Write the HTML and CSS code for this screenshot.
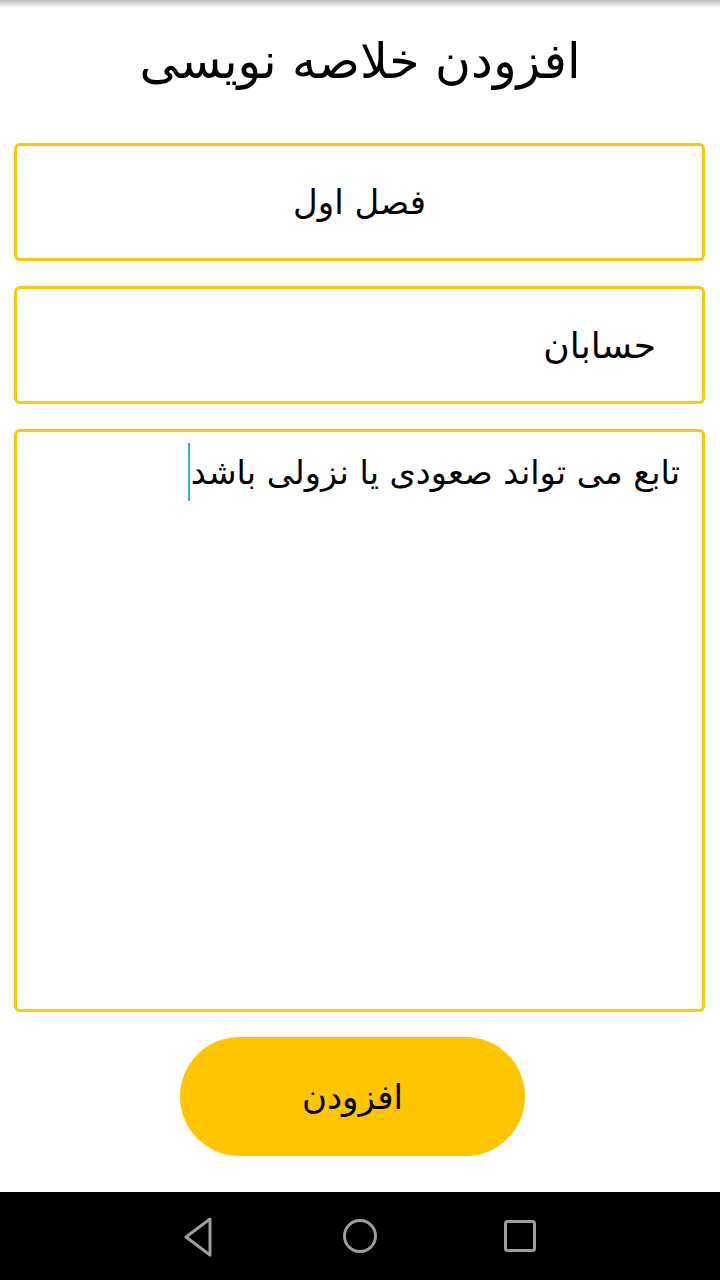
FILE: index.html
```html
<!DOCTYPE html>
<html lang="fa">
<head>
<meta charset="utf-8">
<link rel="stylesheet" href="styles.css">
</head>
<body>
<div class="screen">
  <div class="topshade"></div>
  <h1 class="title">افزودن خلاصه نویسی</h1>
  <div class="form">
    <div class="field field-center">فصل اول</div>
    <div class="field field-right">حسابان</div>
    <div class="field field-area"><p class="area-text">تابع می تواند صعودی یا نزولی باشد<span class="caret"></span></p></div>
    <div class="btn-row"><div class="btn">افزودن</div></div>
  </div>
  <div class="navbar">
    <svg class="nav-icon" width="40" height="44" viewBox="0 0 40 44"><path d="M30 5 L6 23 L30 41 Z" fill="none" stroke="#9e9e9e" stroke-width="3" stroke-linejoin="round"/></svg>
    <svg class="nav-icon" width="40" height="40" viewBox="0 0 40 40"><circle cx="20" cy="20" r="15.5" fill="none" stroke="#9e9e9e" stroke-width="3"/></svg>
    <svg class="nav-icon" width="40" height="40" viewBox="0 0 40 40"><rect x="5.5" y="5.5" width="29" height="29" rx="2" fill="none" stroke="#9e9e9e" stroke-width="3"/></svg>
  </div>
</div>
</body>
</html>
```
FILE: styles.css
```css
html, body {
  margin: 0;
  padding: 0;
  background: #ffffff;
}
.screen {
  width: 720px;
  height: 1280px;
  display: flex;
  flex-direction: column;
  font-family: "DejaVu Sans", "Noto Sans", sans-serif;
  color: #000;
  position: relative;
  overflow: hidden;
}
.topshade {
  position: absolute;
  top: 0;
  left: 0;
  right: 0;
  height: 8px;
  background: linear-gradient(#bdbdbd, rgba(255,255,255,0));
}
.title {
  margin: 0;
  height: 130px;
  display: flex;
  align-items: center;
  justify-content: center;
  padding-bottom: 8px;
  box-sizing: border-box;
  font-size: 49px;
  font-weight: normal;
  direction: rtl;
}
.form {
  display: flex;
  flex-direction: column;
  gap: 25px;
  padding: 13px 15px 0 14px;
  flex: 1;
}
.field {
  border: 3px solid #ffc800;
  border-radius: 6px;
  height: 118px;
  box-sizing: border-box;
  font-size: 34px;
  direction: rtl;
  display: flex;
  align-items: center;
}
.field-center {
  justify-content: center;
}
.field-right {
  padding-right: 46px;
  font-size: 36px;
}
.field-area {
  height: 583px;
  align-items: flex-start;
  padding: 11px 22px 0 0;
  font-size: 33.5px;
}
.area-text {
  margin: 0;
  line-height: 1.2;
}
.caret {
  display: inline-block;
  width: 2px;
  height: 58px;
  margin-right: 1px;
  vertical-align: -17px;
  background: #26bcc8;
}
.btn-row {
  display: flex;
  justify-content: flex-start;
  padding-left: 166px;
}
.btn {
  width: 345px;
  height: 119px;
  border-radius: 60px / 60px;
  background: #ffc600;
  display: flex;
  align-items: center;
  justify-content: center;
  font-size: 34px;
  direction: rtl;
}
.navbar {
  height: 88px;
  background: #000;
  display: flex;
  align-items: center;
  justify-content: center;
  gap: 120px;
  margin-top: auto;
}
.nav-icon {
  display: block;
}
```
